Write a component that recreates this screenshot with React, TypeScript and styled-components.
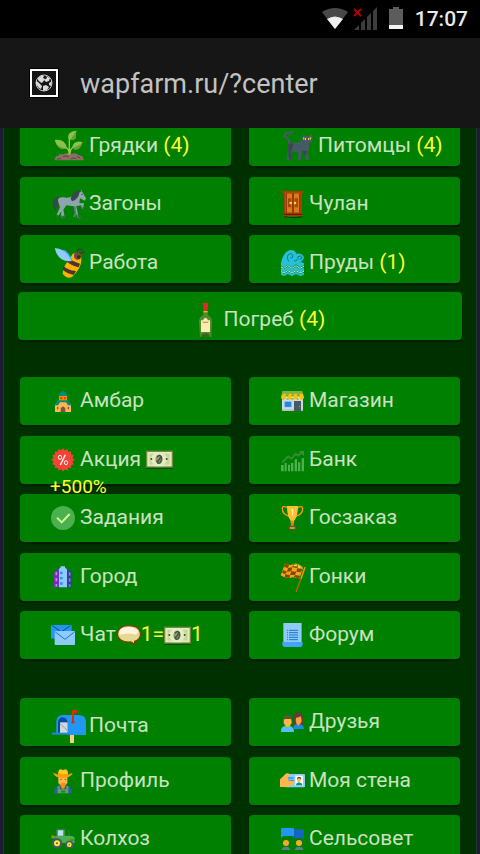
import React from "react";
import styled, { createGlobalStyle, css } from "styled-components";

const GlobalStyle = createGlobalStyle`
  * { box-sizing: border-box; }
  html, body, #root { height: 100%; }
  body {
    margin: 0;
    background: #1a1d33;
    font-family: Roboto, "Noto Sans", sans-serif;
    overflow: hidden;
  }
`;

const Screen = styled.div`
  display: flex;
  flex-direction: column;
  height: 100%;
`;

const StatusBar = styled.header`
  flex: none;
  display: flex;
  align-items: center;
  justify-content: flex-end;
  height: 38px;
  padding-right: 12px;
  background: #000;
  color: #e8e8e8;
`;

const Clock = styled.time`
  margin-left: 11px;
  font-size: 21px;
  font-weight: 500;
  line-height: 40px;
`;

const AddressBar = styled.form`
  flex: none;
  display: flex;
  align-items: center;
  gap: 21px;
  height: 90px;
  padding: 0 29px;
  background: #161616;
`;

const SiteButton = styled.button`
  flex: none;
  display: grid;
  place-items: center;
  width: 30px;
  height: 30px;
  padding: 0;
  border: 1px solid #000;
  background: #161616;
  outline: 2px solid #fff;
  outline-offset: -3px;
`;

const Address = styled.input`
  flex: 1;
  min-width: 0;
  padding: 2px 0 0;
  border: 0;
  outline: 0;
  background: transparent;
  color: #c2c2c2;
  font: 400 27px/36px Roboto, sans-serif;
`;

const Viewport = styled.main`
  flex: 1;
  min-height: 0;
  overflow: hidden;
  padding: 0 3px;
`;

const Panel = styled.div`
  min-height: 100%;
  border: solid #26382c;
  border-width: 0 1px;
  background: #003000;
  display: flow-root;
`;

const Group = styled.nav<{ $top: number; $height: number }>`
  display: grid;
  grid-template-columns: 1fr 1fr;
  column-gap: 18px;
  align-content: space-between;
  min-height: ${(p) => p.$height}px;
  margin: ${(p) => p.$top}px 16px 0;
`;

const WideRow = styled.nav`
  margin: 9px 14px 0;
`;

const Tile = styled.a<{ $low?: boolean; $centered?: boolean }>`
  position: relative;
  display: flex;
  align-items: center;
  height: 48px;
  padding-left: 31px;
  border-radius: 4px;
  background: #008000;
  box-shadow: 0 2px 2px rgba(0, 0, 0, 0.4);
  color: #cbe2c2;
  font-size: 21px;
  line-height: 28px;
  text-decoration: none;
  white-space: nowrap;
  ${(p) => p.$low && css`padding-top: 7px;`}
  ${(p) => p.$centered && css`justify-content: center;`}
`;

const Label = styled.span<{ $big?: boolean }>`
  margin-left: ${(p) => (p.$big ? 2 : 5)}px;
  padding-bottom: 2px;
`;

const Yellow = styled.span`
  color: #ffff33;
`;

const Bonus = styled.span`
  position: absolute;
  z-index: 1;
  left: 30px;
  top: 37px;
  color: #ffff33;
  font-size: 19px;
`;

const Glyph = styled.svg<{ $w: number; $h: number }>`
  flex: none;
  display: block;
  width: ${(p) => p.$w}px;
  height: ${(p) => p.$h}px;
  overflow: visible;
`;

type IconProps = { box: string; big?: boolean; children: React.ReactNode };
const Icon = ({ box, big, children }: IconProps) => {
  const side = big ? 36 : 24;
  return (
    <Glyph $w={side} $h={side} viewBox={box} aria-hidden="true">
      {children}
    </Glyph>
  );
};

const Sprout = () => (
  <Icon big box="153 12 108 108">
    <path d="M164 109 Q163 97 174 95 Q180 87 190 91 Q204 84 218 89 Q228 86 235 93 Q251 94 251 109 Z" fill="#8d6e63" />
    <path d="M171 107 Q176 101 184 105 M190 98 Q200 93 206 99 M213 105 Q220 99 229 104 M231 97 L241 103" fill="none" stroke="#5d4037" strokeWidth="3" />
    <path d="M207 92 Q210 76 196 70 M208 92 V44 M210 88 Q211 71 224 68" fill="none" stroke="#9ccc3c" strokeWidth="4" />
    <path d="M164 48 Q195 44 201 73 Q174 83 164 48 Z M248 54 Q220 48 216 72 Q238 87 248 54 Z M229 20 Q201 23 204 43 Q211 51 226 44 Z" fill="#8bc34a" />
    <path d="M164 48 Q172 73 201 73 Q174 83 164 48 Z M248 54 Q238 66 216 72 Q238 87 248 54 Z M229 20 L211 48 Q220 50 226 44 Z" fill="#689f38" />
  </Icon>
);

const Horse = () => (
  <Icon big box="153 188 108 108">
    <path d="M177 222 Q159 220 159 240 Q157 254 168 265 Q167 252 174 244 Z" fill="#37474f" />
    <path d="M174 233 Q172 221 190 222 Q207 226 218 217 Q229 203 242 203 L244 199 L247 206 L258 225 L255 232 L240 225 L238 239 L252 240 L249 257 L243 257 L245 246 L229 248 L234 274 L242 281 L240 285 L233 284 L221 249 L199 246 L190 259 L194 281 L188 285 L183 281 L184 264 L174 279 L170 275 L180 252 Z" fill="#90a4ae" />
    <path d="M212 226 Q216 207 238 201 L246 203 L239 207 Q234 230 216 234 Z" fill="#37474f" />
    <path d="M184 277 H193 L196 284 H189 L184 281 Z M231 276 L239 275 L244 284 H235 Z M169 273 L175 276 L174 281 L169 279 Z M243 252 L249 252 L247 258 L242 257 Z" fill="#455a64" />
    <path d="M221 248 L228 250 L227 280 L219 280 L224 269 Z" fill="#607d8b" />
    <circle cx="246" cy="213" r="2" fill="#263238" />
  </Icon>
);

const Bee = () => (
  <Icon big box="153 363 108 108">
    <path d="M217 391 Q231 382 244 400 Q247 430 217 458 Q202 467 188 449 Q188 427 208 407 Z" fill="#ffb300" />
    <path d="M204 399 Q214 412 240 419 L236 430 Q212 424 198 411 Z M190 425 Q202 438 228 441 L221 453 Q201 449 188 438 Z" fill="#4e342e" />
    <circle cx="233" cy="396" r="11" fill="#6d4c41" />
    <circle cx="236" cy="399" r="5" fill="#3e2723" />
    <path d="M232 385 L234 376 L248 376 M240 388 L253 383" fill="none" stroke="#4e342e" strokeWidth="4" />
    <path d="M190 377 Q208 382 217 411 Q200 407 188 377 Z" fill="#42a5f5" />
    <path d="M164 373 Q194 371 215 411 Q176 417 164 373 Z" fill="#90caf9" />
  </Icon>
);

const Cat = () => (
  <Icon big box="120 12 108 108">
    <path d="M157 25 Q132 26 133 37 Q151 41 147 62" fill="none" stroke="#455a64" strokeWidth="7" strokeLinecap="round" />
    <path d="M145 61 Q151 52 172 56 L187 48 L188 30 L196 36 L208 36 L216 29 L218 47 Q216 57 206 58 L208 73 L202 86 L208 104 L198 110 L191 83 L184 84 L183 108 L173 107 L175 84 Q164 85 158 81 L151 91 L156 105 L149 111 L139 106 L142 90 Z" fill="#455a64" />
    <path d="M145 61 Q153 55 161 59 L152 87 L155 104 L148 108 L145 88 Z M185 80 L201 81 L196 96 Z" fill="#37474f" />
    <path d="M189 40 L199 43 L197 49 L190 47 Z M204 43 L214 40 L212 47 L205 49 Z" fill="#fdd835" />
    <path d="M193 41 V48 M209 42 V48" stroke="#263238" strokeWidth="2" />
  </Icon>
);

const Cupboard = () => (
  <Icon box="120 206 72 72">
    <path d="M134 278 Q158 286 183 278 L191 281 Q161 288 132 281 Z" fill="#003c00" />
    <path d="M123 203 H192 L188 211 H186 V274 L190 279 H128 L132 274 V211 L126 209 Z" fill="#a93b08" />
    <rect x="136" y="206" width="44" height="68" fill="#c95809" />
    <rect x="139" y="209" width="18" height="60" fill="#d87b12" stroke="#732705" strokeWidth="2" />
    <rect x="160" y="209" width="18" height="60" fill="#d87b12" stroke="#732705" strokeWidth="2" />
    <path d="M144 225 H154 V252 H144 Z M164 225 H174 V252 H164 Z" fill="#a94609" />
    <circle cx="152" cy="239" r="4" fill="#ffd54f" />
    <circle cx="165" cy="239" r="4" fill="#ffd54f" />
    <path d="M132 273 H187" stroke="#5d1d02" strokeWidth="4" />
  </Icon>
);

const Wave = () => (
  <Icon box="120 381 72 72">
    <path d="M123 418 Q129 383 152 378 Q166 379 169 389 Q188 386 192 400 Q190 412 181 413 L192 418 V424 L180 430 L168 421 L156 430 L143 422 L131 430 L123 426 Z" fill="#26c0dc" />
    <path d="M123 432 L132 436 L143 428 L156 436 L168 428 L179 436 L192 431 V440 L180 445 L168 437 L156 445 L143 437 L132 445 L123 441 Z M123 446 L132 450 L143 443 L156 450 L168 443 L179 450 L192 446 V452 L181 456 L168 450 L156 456 L143 450 L132 456 L123 453 Z" fill="#26c0dc" />
    <path d="M123 429 L131 433 L143 425 L156 433 L168 425 L180 433 L192 427 M123 443 L132 447 L143 440 L156 447 L168 440 L180 447 L192 442" fill="none" stroke="#b2ebf2" strokeWidth="3" />
    <path d="M146 412 Q137 395 149 389 Q160 389 158 399 Q155 405 151 401 M162 411 Q175 410 174 398 Q182 393 186 400 Q185 407 179 406" fill="none" stroke="#0b7f6c" strokeWidth="3" />
  </Icon>
);

const Bottle = () => (
  <Icon big box="555 51 108 108">
    <path d="M607 79 H620 V90 Q633 96 633 110 L631 156 H597 L594 110 Q594 96 607 90 Z" fill="#558b2f" />
    <path d="M605 54 H622 V64 H620 V78 H607 V64 H605 Z" fill="#d32f2f" />
    <path d="M607 78 H620 V82 H607 Z" fill="#ffb300" />
    <path d="M600 106 H606 L609 101 L613 98 L618 101 L621 106 H627 V141 H600 Z" fill="#ffecb3" />
    <path d="M605 112 H622" stroke="#c0ad39" strokeWidth="4" />
    <path d="M600 156 L603 148 Q613 141 624 148 L627 156 Z" fill="#33691e" />
  </Icon>
);

const Barn = () => (
  <Icon box="153 57 72 72">
    <path d="M177 74 H201 V94 H177 Z" fill="#fb8c00" />
    <path d="M177 75 L181 67 L189 62 L197 67 L201 75 V78 H177 Z" fill="#00897b" />
    <path d="M181 82 H187 V88 H181 Z M192 82 H197 V88 H192 Z" fill="#a65000" />
    <path d="M174 92 H203 L213 106 V126 H165 V106 Z" fill="#ffb74d" />
    <path d="M174 91 H203 L214 106 H204 L198 97 H180 L174 106 H164 Z" fill="#00897b" />
    <path d="M182 126 V115 Q189 104 196 115 V126 Z M171 111 H175 V118 H171 Z M203 111 H207 V118 H203 Z" fill="#795548" />
  </Icon>
);

const badgePoints = Array.from({ length: 32 }, (_, i) => {
  const r = i % 2 ? 29 : 35;
  const a = (i * Math.PI) / 16;
  return `${(189 + r * Math.sin(a)).toFixed(1)},${(268.5 - r * Math.cos(a)).toFixed(1)}`;
}).join(" ");

const Percent = () => (
  <Icon box="153 233 72 72">
    <polygon points={badgePoints} fill="#f44336" />
    <path d="M196 253 L181 284" stroke="#fff" strokeWidth="4" />
    <ellipse cx="180" cy="261" rx="5" ry="6" fill="none" stroke="#fff" strokeWidth="3" />
    <ellipse cx="198" cy="277" rx="5" ry="6" fill="none" stroke="#fff" strokeWidth="3" />
  </Icon>
);

const Done = () => (
  <Icon box="153 408 72 72">
    <circle cx="189" cy="444" r="36" fill="#4caf50" />
    <path d="M171 443 L185 457 L209 432" fill="none" stroke="#ccff90" strokeWidth="6" />
  </Icon>
);

const City = () => (
  <Icon box="153 89 72 72">
    <path d="M162 111 L177 100 V156 H162 Z" fill="#7b2bc1" />
    <path d="M169 110 V154" stroke="#b98be5" strokeWidth="5" strokeDasharray="10 8" />
    <path d="M201 103 L215 108 V156 H201 Z" fill="#303f9f" />
    <path d="M209 111 V154" stroke="#7986cb" strokeWidth="5" strokeDasharray="10 8" />
    <path d="M177 101 L182 96 V93 H195 V97 L201 102 V156 H177 Z" fill="#90caf9" />
    <path d="M180 109 H188 V116 H180 Z M180 125 H188 V132 H180 Z M180 141 H188 V148 H180 Z" fill="#2196f3" />
  </Icon>
);

const Mail = () => (
  <Icon box="153 264 72 72">
    <path d="M153 272 Q153 270 156 270 H215 V311 H153 Z" fill="#2196f3" />
    <path d="M157 272 L184 291 L211 272" fill="none" stroke="#0d47a1" strokeWidth="3" />
    <rect x="164" y="288" width="61" height="42" rx="3" fill="#90caf9" />
    <path d="M166 291 L195 313 L223 291" fill="none" stroke="#1976d2" strokeWidth="3" />
  </Icon>
);

const Shop = () => (
  <Icon box="120 57 72 72">
    <path d="M126 80 H189 V123 H126 Z" fill="#cfd8dc" />
    <path d="M126 118 H189 V123 H126 Z" fill="#b0bec5" />
    <path d="M162 93 H183 V123 H162 Z" fill="#455a64" />
    <path d="M134 95 H154 V111 H134 Z" fill="#1e88e5" stroke="#64b5f6" strokeWidth="1" />
    <path d="M127 63 H187 L192 82 Q186 94 179 84 Q172 94 165 84 Q157 94 150 84 Q143 94 136 84 Q128 94 123 82 Z" fill="#7cb342" />
    <path d="M130 71 H138 L136 84 Q129 94 123 82 Z M147 71 H155 V83 Q149 94 143 83 Z M162 71 H170 L174 83 Q168 94 161 83 Z M179 71 H188 L192 83 Q186 94 179 84 Z" fill="#ffc107" />
    <path d="M137 80 H143 V85 H137 Z M155 80 H161 V85 H155 Z M174 80 H179 V85 H174 Z" fill="#fff8c4" />
    <circle cx="178" cy="109" r="2" fill="#90a4ae" />
  </Icon>
);

const Chart = () => (
  <Icon box="120 233 72 72">
    <path d="M123 284 H131 V303 H123 Z M134 278 H140 V303 H134 Z M144 283 H150 V303 H144 Z M153 278 H160 V303 H153 Z M164 267 H171 V303 H164 Z M174 276 H181 V303 H174 Z M185 264 H192 V303 H185 Z" fill="#4caf50" />
    <path d="M127 276 L144 258 L154 265 L168 250 L174 256 L187 245" fill="none" stroke="#388e3c" strokeWidth="5" />
    <path d="M176 242 H192 V257 Z" fill="#388e3c" />
  </Icon>
);

const Trophy = () => (
  <Icon box="120 408 72 72">
    <path d="M142 412 Q126 406 127 416 Q127 433 149 439 M173 412 Q188 406 188 416 Q188 433 166 439" fill="none" stroke="#ff9800" strokeWidth="4" />
    <path d="M141 408 H174 Q174 440 162 452 V459 H152 V452 Q141 439 141 408 Z" fill="#fbc02d" />
    <path d="M154 452 H160 L162 467 H152 Z" fill="#f57c00" />
    <path d="M145 468 H169 V479 H145 Z" fill="#6d4c41" />
    <path d="M150 472 H164 V476 H150 Z" fill="#ffca28" />
    <path d="M153 421 L158 418 V436" fill="none" stroke="#fff8c4" strokeWidth="3" />
  </Icon>
);

const RaceFlag = () => (
  <Icon box="120 89 72 72">
    <path d="M195 96 L168 171" stroke="#b06a00" strokeWidth="4" />
    <path d="M195 96 L183 130" stroke="#e8a000" strokeWidth="4" />
    <path d="M136 83 Q148 94 160 86 Q174 81 189 97 L178 130 Q161 122 151 128 Q133 130 122 120 Z" fill="#eda51f" />
    <path d="M136 83 L147 89 L144 98 L132 95 Z M160 86 L174 87 L172 98 L157 96 Z M144 98 L157 96 L154 108 L141 109 Z M172 98 L187 101 L182 111 L169 109 Z M129 104 L141 109 L136 116 L126 113 Z M154 108 L169 109 L165 119 L150 119 Z M136 117 L150 119 L149 128 L134 126 Z M165 119 L180 121 L178 130 L162 124 Z" fill="#8a4800" />
    <path d="M161 88 L172 87 L171 93 L160 93 Z M174 90 L183 96 L176 100 Z" fill="#e8df53" />
  </Icon>
);

const Scroll = () => (
  <Icon box="120 264 72 72">
    <path d="M130 264 H185 V325 H130 Z" fill="#90caf9" />
    <path d="M183 264 H186 V321 H183 Z" fill="#42a5f5" />
    <path d="M127 321 H188 V328 Q188 333 183 336 H132 Q127 333 127 328 Z" fill="#42a5f5" />
    <path d="M147 286 H174 M147 293 H174 M147 300 H174 M147 307 H174 M147 314 H174" stroke="#1976d2" strokeWidth="3" />
    <path d="M141 286 H144 M141 293 H144 M141 300 H144 M141 307 H144 M141 314 H144" stroke="#1976d2" strokeWidth="3" />
  </Icon>
);

const Mailbox = () => (
  <Icon big box="153 54 108 108">
    <path d="M210 130 H222 V159 H210 Z" fill="#ffcc80" />
    <path d="M169 129 V94 Q171 75 189 75 H239 Q258 77 258 96 V135 H202 V129 Z" fill="#2196f3" />
    <path d="M174 129 V96 Q176 82 188 82 Q201 83 203 97 V129 Z" fill="#0d47a1" />
    <path d="M180 97 H203 V129 H180 Z" fill="#cfd8dc" />
    <path d="M180 101 L203 122" stroke="#90a4ae" strokeWidth="3" />
    <path d="M156 128 H208 V134 H156 Z" fill="#1e88e5" />
    <path d="M216 60 H231 V70 H222 V92 A5 5 0 1 1 216 92 Z" fill="#dd2c00" />
  </Icon>
);

const Farmer = () => (
  <Icon box="153 236 72 72">
    <path d="M162 309 Q162 289 178 285 H200 Q216 289 216 309 Z" fill="#3f51b5" />
    <path d="M173 287 H179 V297 H199 V287 H205 V309 H173 Z" fill="#4caf50" />
    <path d="M183 301 H196 V307 H183 Z" fill="#2e7d32" />
    <path d="M175 256 H202 V278 Q189 298 175 278 Z" fill="#ffb74d" />
    <path d="M181 280 Q189 274 198 280 L194 292 L189 297 L184 292 Z" fill="#ff8f00" />
    <path d="M160 250 Q160 246 164 249 L173 253 L177 239 Q183 235 189 240 Q195 235 201 239 L205 253 L214 249 Q218 247 217 252 Q206 264 189 263 Q170 264 160 250 Z" fill="#ffa000" />
    <path d="M175 247 L177 239 Q183 235 189 240 Q195 235 201 239 L204 249 Q188 255 175 247 Z" fill="#ffca28" />
    <circle cx="183" cy="267" r="2" fill="#784719" />
    <circle cx="196" cy="267" r="2" fill="#784719" />
  </Icon>
);

const Tractor = () => (
  <Icon box="153 411 72 72">
    <path d="M170 418 H195 V437 H209 Q222 438 224 443 V459 H165 Z" fill="#4caf50" />
    <path d="M174 421 H191 V437 H174 Z" fill="#bbdefb" />
    <path d="M168 418 H196 M171 418 L169 440 M192 420 V438 M207 438 V423 H202 M209 450 H224" fill="none" stroke="#2e7d32" strokeWidth="3" />
    <path d="M154 439 H170 V445 H154 Z" fill="#4caf50" />
    <path d="M155 436 H162 V441 H155 Z" fill="#ff5722" />
    <circle cx="171" cy="460" r="16" fill="#455a64" />
    <circle cx="171" cy="460" r="9" fill="#ffeb3b" />
    <circle cx="171" cy="460" r="3" fill="#6d5c12" />
    <circle cx="208" cy="464" r="12" fill="#455a64" />
    <circle cx="208" cy="464" r="7" fill="#ffeb3b" />
    <circle cx="208" cy="464" r="2" fill="#6d5c12" />
  </Icon>
);

const Friends = () => (
  <Icon box="120 60 72 72">
    <path d="M160 105 Q156 66 174 66 Q192 66 190 105 Z" fill="#5d4037" />
    <path d="M160 117 Q160 105 169 103 H181 Q192 106 192 117 Z" fill="#1e88e5" />
    <path d="M168 83 Q178 83 182 78 L185 90 Q184 101 178 103 L175 108 L170 102 Q165 95 168 83 Z" fill="#ff9e40" />
    <path d="M123 126 Q122 110 135 108 H150 Q162 111 162 126 Z" fill="#4fc3f7" />
    <path d="M137 107 H148 L143 116 Z" fill="#ff9800" />
    <path d="M131 87 H155 V98 Q150 110 143 110 Q135 109 131 98 Z" fill="#ffb74d" />
    <path d="M130 96 Q127 75 143 76 Q158 75 156 96 L153 87 L145 84 L133 88 Z" fill="#6d4c41" />
  </Icon>
);

const IdCard = () => (
  <Icon box="120 236 72 72">
    <rect x="134" y="251" width="61" height="40" rx="3" fill="#90caf9" />
    <rect x="166" y="256" width="23" height="29" fill="#fff" />
    <path d="M168 285 Q168 278 177 276 Q187 278 187 285 Z" fill="#009688" />
    <ellipse cx="177" cy="269" rx="5" ry="7" fill="#ffb74d" />
    <path d="M171 269 Q170 259 177 260 Q185 259 183 269 L180 264 H174 Z" fill="#424242" />
    <path d="M143 263 H161 M143 270 H161" stroke="#1976d2" strokeWidth="3" />
    <path d="M120 267 L140 249 Q148 247 149 253 L142 264 L146 271 Q162 270 161 277 Q159 286 148 287 L136 290 H120 Z" fill="#ffb74d" />
  </Icon>
);

const Council = () => (
  <Icon box="120 411 72 72">
    <path d="M158 418 H189 L192 421 V451 L186 445 H158 Z" fill="#1565c0" />
    <path d="M126 414 H159 L162 417 V438 H130 L123 445 V417 Z" fill="#2196f3" />
    <circle cx="138" cy="459" r="9" fill="#ffa726" />
    <circle cx="177" cy="459" r="9" fill="#ffa726" />
    <path d="M124 480 Q127 470 138 470 Q149 470 151 480 Z M164 480 Q167 470 177 470 Q188 470 191 480 Z" fill="#607d8b" />
  </Icon>
);

const Money = () => (
  <Glyph $w={27} $h={19} viewBox="438 241 81 57" aria-hidden="true">
    <path d="M439 293 H519 V298 H439 Z" fill="#075007" />
    <path d="M438 243 H519 V294 H438 Z" fill="#6f8b45" />
    <path d="M442 247 H515 V290 H442 Z" fill="#e5edb8" />
    <path d="M448 252 H509 V285 H448 Z" fill="#c7d69a" />
    <path d="M464 247 H490 L504 268 L490 290 H464 L450 268 Z" fill="#e4ecc1" />
    <ellipse cx="477" cy="269" rx="11" ry="14" fill="#92a17a" />
    <path d="M471 263 Q477 253 484 261 Q486 274 479 280 Q471 283 471 272 M474 276 L483 260" fill="none" stroke="#45543a" strokeWidth="4" />
    <circle cx="454" cy="268" r="3" fill="#34472a" />
    <circle cx="500" cy="268" r="3" fill="#34472a" />
  </Glyph>
);

const Bubble = () => (
  <Glyph $w={24} $h={20} viewBox="352 274 72 60" aria-hidden="true">
    <path d="M387 276 C430 276 432 316 405 323 L405 332 L393 325 C340 329 342 275 387 276 Z" fill="#e6d792" stroke="#744400" strokeWidth="4" />
    <path d="M387 281 C417 281 420 298 408 303 Q390 296 360 303 C355 289 366 281 387 281 Z" fill="#fff5df" />
  </Glyph>
);

const PriceTag = styled.span`
  display: flex;
  align-items: center;
  margin-left: 1px;
  color: #ffff33;
`;

const PriceText = styled.span`
  padding-bottom: 2px;
`;

const Promo = styled.span`
  margin-left: 5px;
`;

type Entry = {
  text: string;
  icon: React.ReactNode;
  href: string;
  big?: boolean;
  low?: boolean;
  count?: number;
  extra?: React.ReactNode;
};

const fields: Entry[] = [
  { text: "Грядки", icon: <Sprout />, href: "#beds", big: true, low: true, count: 4 },
  { text: "Питомцы", icon: <Cat />, href: "#pets", big: true, low: true, count: 4 },
  { text: "Загоны", icon: <Horse />, href: "#pens", big: true, low: true },
  { text: "Чулан", icon: <Cupboard />, href: "#closet", low: true },
  { text: "Работа", icon: <Bee />, href: "#work", big: true, low: true },
  { text: "Пруды", icon: <Wave />, href: "#ponds", low: true, count: 1 },
];

const town: Entry[] = [
  { text: "Амбар", icon: <Barn />, href: "#barn" },
  { text: "Магазин", icon: <Shop />, href: "#shop" },
  {
    text: "Акция",
    icon: <Percent />,
    href: "#sale",
    extra: (
      <Promo>
        <Money />
        <Bonus>+500%</Bonus>
      </Promo>
    ),
  },
  { text: "Банк", icon: <Chart />, href: "#bank" },
  { text: "Задания", icon: <Done />, href: "#tasks" },
  { text: "Госзаказ", icon: <Trophy />, href: "#orders" },
  { text: "Город", icon: <City />, href: "#city" },
  { text: "Гонки", icon: <RaceFlag />, href: "#races" },
  {
    text: "Чат",
    icon: <Mail />,
    href: "#chat",
    extra: (
      <PriceTag>
        <Bubble />
        <PriceText>1=</PriceText>
        <Money />
        <PriceText>1</PriceText>
      </PriceTag>
    ),
  },
  { text: "Форум", icon: <Scroll />, href: "#forum" },
];

const people: Entry[] = [
  { text: "Почта", icon: <Mailbox />, href: "#mail", big: true, low: true },
  { text: "Друзья", icon: <Friends />, href: "#friends" },
  { text: "Профиль", icon: <Farmer />, href: "#profile" },
  { text: "Моя стена", icon: <IdCard />, href: "#wall" },
  { text: "Колхоз", icon: <Tractor />, href: "#kolkhoz" },
  { text: "Сельсовет", icon: <Council />, href: "#council" },
];

const TileLink = ({ text, icon, href, big, low, count, extra, centered }: Entry & { centered?: boolean }) => (
  <Tile href={href} $low={low} $centered={centered}>
    {icon}
    <Label $big={big}>
      {text}
      {count !== undefined && <Yellow> ({count})</Yellow>}
    </Label>
    {extra}
  </Tile>
);

const tiles = (entries: Entry[]) => entries.map((e) => <TileLink key={e.href} {...e} />);

export default function App() {
  return (
    <Screen>
      <GlobalStyle />
      <StatusBar>
        <Glyph $w={82} $h={24} viewBox="0 0 82 24" aria-hidden="true">
          <path d="M0 5 Q13 -3 26 5 L13 22 Z" fill="#484848" />
          <path d="M5 12 Q13 7 21 12 L13 22 Z" fill="#f0f0f0" />
          <path d="M32 23 L37 18 V23 Z M39 16 L43 12 V23 H39 Z M45 10 L49 6 V23 H45 Z M51 4 L55 0 V23 H51 Z" fill="#3d3d3d" />
          <path d="M32 2 L39 9 M39 2 L32 9" stroke="#b00000" strokeWidth="2" />
          <path d="M67 2 H71 V0 H77 V2 H81 V22 H67 Z" fill="#5c5c5c" />
          <path d="M67 18 H81 V22 H67 Z" fill="#f4f4f4" />
        </Glyph>
        <Clock>17:07</Clock>
      </StatusBar>

      <AddressBar onSubmit={(e) => e.preventDefault()}>
        <SiteButton type="button" aria-label="Site information">
          <Glyph $w={18} $h={18} viewBox="0 0 18 18" aria-hidden="true">
            <circle cx="9" cy="9" r="8" fill="none" stroke="#c4c4c4" strokeWidth="1" />
            <path d="M1 7 L3 8 L7 12 L6 15 L4 14 L1 10 Z M3 4 L7 1 L9 2 L8 4 L10 5 L7 9 L5 8 L3 6 Z M11 2 L15 4 L14 7 L11 8 L9 6 L12 4 Z M8 12 L11 11 L14 13 L12 16 L8 17 Z M14 9 L17 7 L16 12 L14 11 Z" fill="#dadada" />
          </Glyph>
        </SiteButton>
        <Address aria-label="Address" defaultValue="wapfarm.ru/?center" spellCheck={false} />
      </AddressBar>

      <Viewport>
        <Panel>
          <Group $top={-10} $height={165}>{tiles(fields)}</Group>
          <WideRow>
            <TileLink text="Погреб" icon={<Bottle />} href="#cellar" big low centered count={4} />
          </WideRow>
          <Group $top={37} $height={282}>{tiles(town)}</Group>
          <Group $top={39} $height={165}>{tiles(people)}</Group>
        </Panel>
      </Viewport>
    </Screen>
  );
}
